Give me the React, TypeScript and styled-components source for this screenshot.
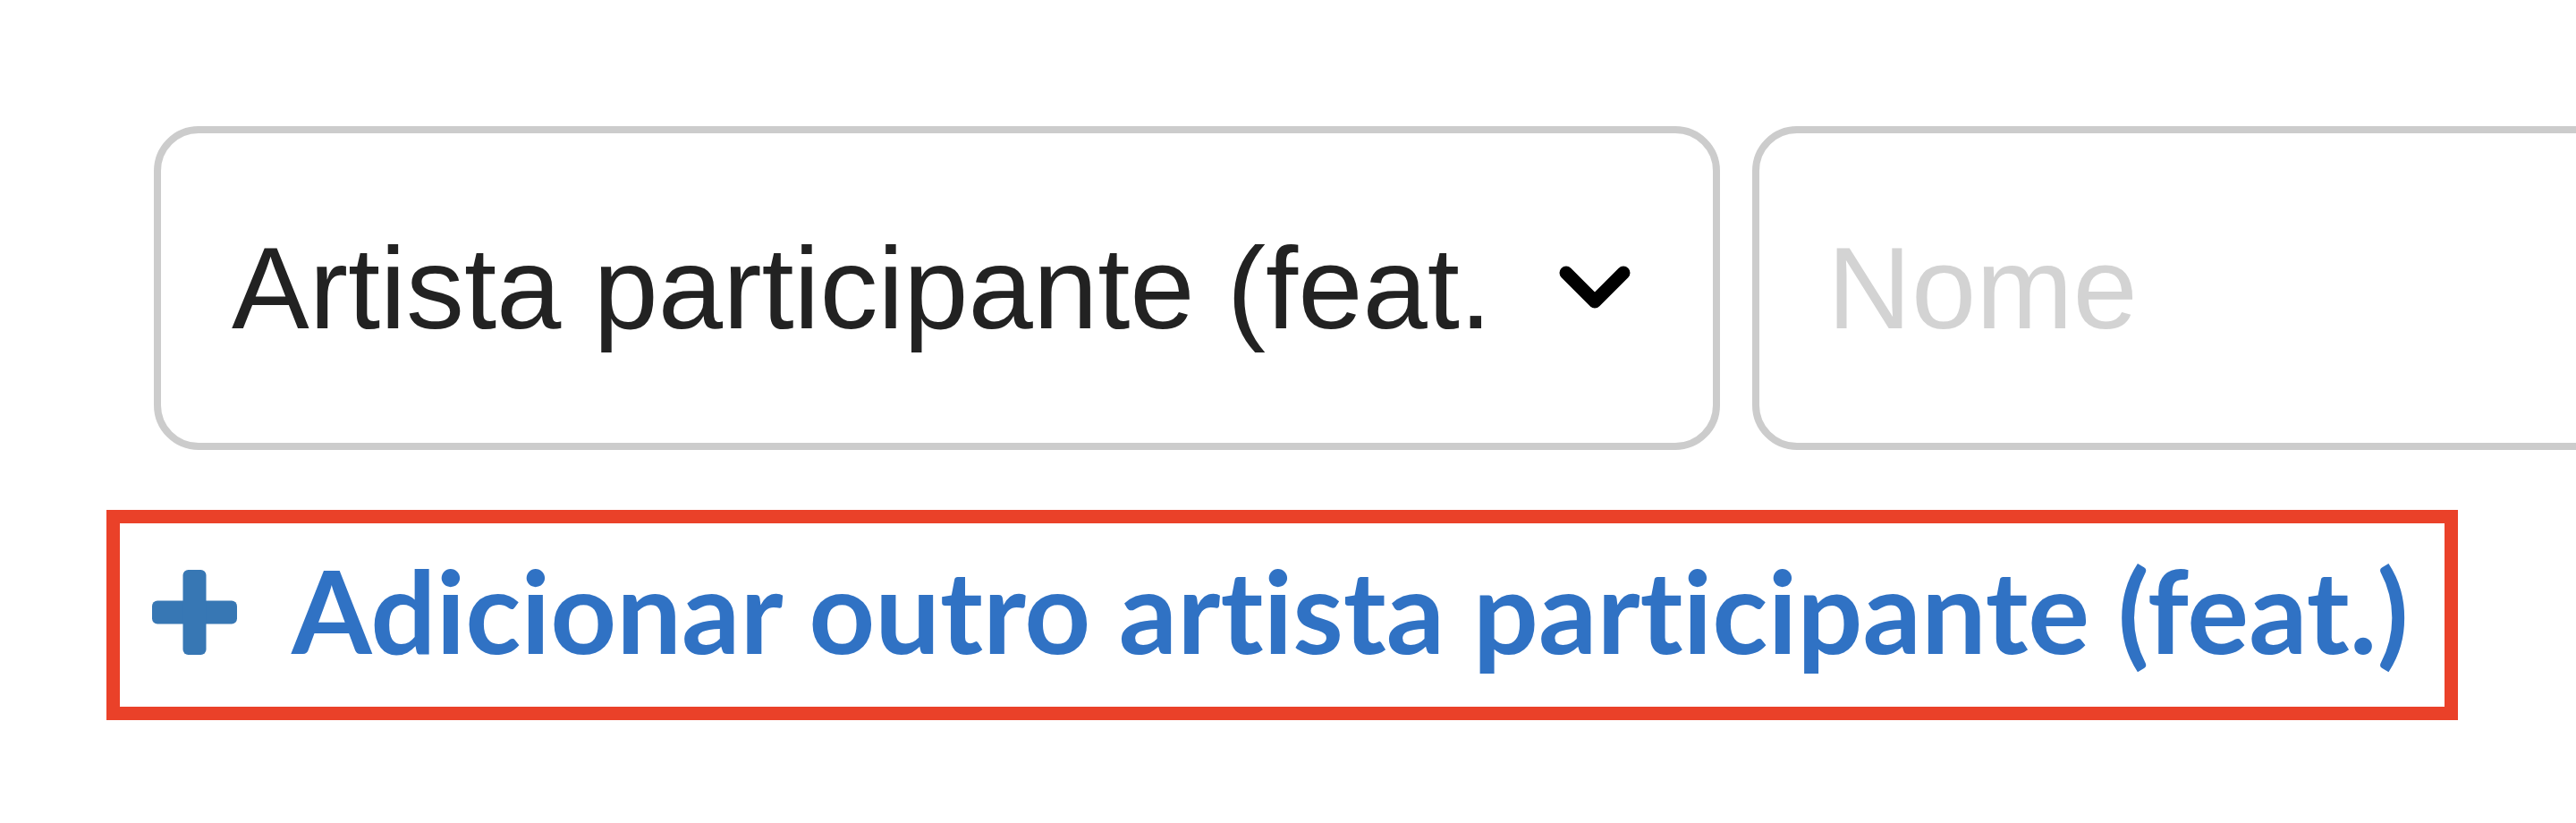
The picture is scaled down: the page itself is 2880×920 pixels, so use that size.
import styled, { createGlobalStyle } from 'styled-components';

const GlobalStyle = createGlobalStyle`
  html, body {
    margin: 0;
    padding: 0;
    background: #ffffff;
    overflow: hidden;
  }
`;

const Page = styled.main`
  box-sizing: border-box;
  width: 2880px;
  height: 920px;
  padding: 141px 0 0 119px;
  overflow: hidden;
`;

const FieldRow = styled.div`
  display: flex;
  gap: 36px;
  margin-left: 53px;
`;

const fieldBase = `
  box-sizing: border-box;
  flex: 0 0 1751px;
  height: 362px;
  border: 8px solid #cccccc;
  border-radius: 50px;
  background: #ffffff;
  font-family: "Liberation Sans", Arial, Helvetica, sans-serif;
  font-size: 130px;
`;

const SelectBox = styled.div`
  ${fieldBase}
  display: flex;
  align-items: center;
  justify-content: space-between;
  padding: 0 91px 0 79px;
  color: #222222;
  white-space: nowrap;
  overflow: hidden;
`;

const SelectText = styled.span`
  line-height: normal;
`;

const Chevron = styled.svg`
  flex: none;
  width: 82px;
  height: 52px;
`;

const NameInput = styled.input`
  ${fieldBase}
  padding: 0 0 0 76px;
  color: #222222;
  outline: none;

  &::placeholder {
    color: #d3d3d3;
  }
`;

const AddLink = styled.a`
  display: inline-flex;
  align-items: center;
  gap: 61px;
  margin-top: 67px;
  padding: 18px 40px 31px 36px;
  border: 15px solid #ea4129;
  font-family: Lato, "Open Sans", sans-serif;
  font-weight: 700;
  font-size: 129px;
  line-height: 156px;
  font-variant-ligatures: none;
  font-feature-settings: "liga" 0, "clig" 0;
  color: #3072c4;
  text-decoration: none;
  white-space: nowrap;
`;

const PlusIcon = styled.svg`
  flex: none;
  width: 95px;
  height: 95px;
  margin-top: 6px;
`;

export default function App() {
  return (
    <>
      <GlobalStyle />
      <Page>
        <FieldRow>
          <SelectBox>
            <SelectText>Artista participante (feat.</SelectText>
            <Chevron viewBox="0 0 82 52">
              <path
                d="M9 9 L41 41 L73 9"
                fill="none"
                stroke="#000000"
                strokeWidth="15"
                strokeLinecap="round"
                strokeLinejoin="round"
              />
            </Chevron>
          </SelectBox>
          <NameInput placeholder="Nome" />
        </FieldRow>
        <AddLink href="#">
          <PlusIcon viewBox="0 0 95 95">
            <rect x="0" y="34.5" width="95" height="26" rx="6" fill="#3777b4" />
            <rect x="34.5" y="0" width="26" height="95" rx="6" fill="#3777b4" />
          </PlusIcon>
          <span>Adicionar outro artista participante (feat.)</span>
        </AddLink>
      </Page>
    </>
  );
}
